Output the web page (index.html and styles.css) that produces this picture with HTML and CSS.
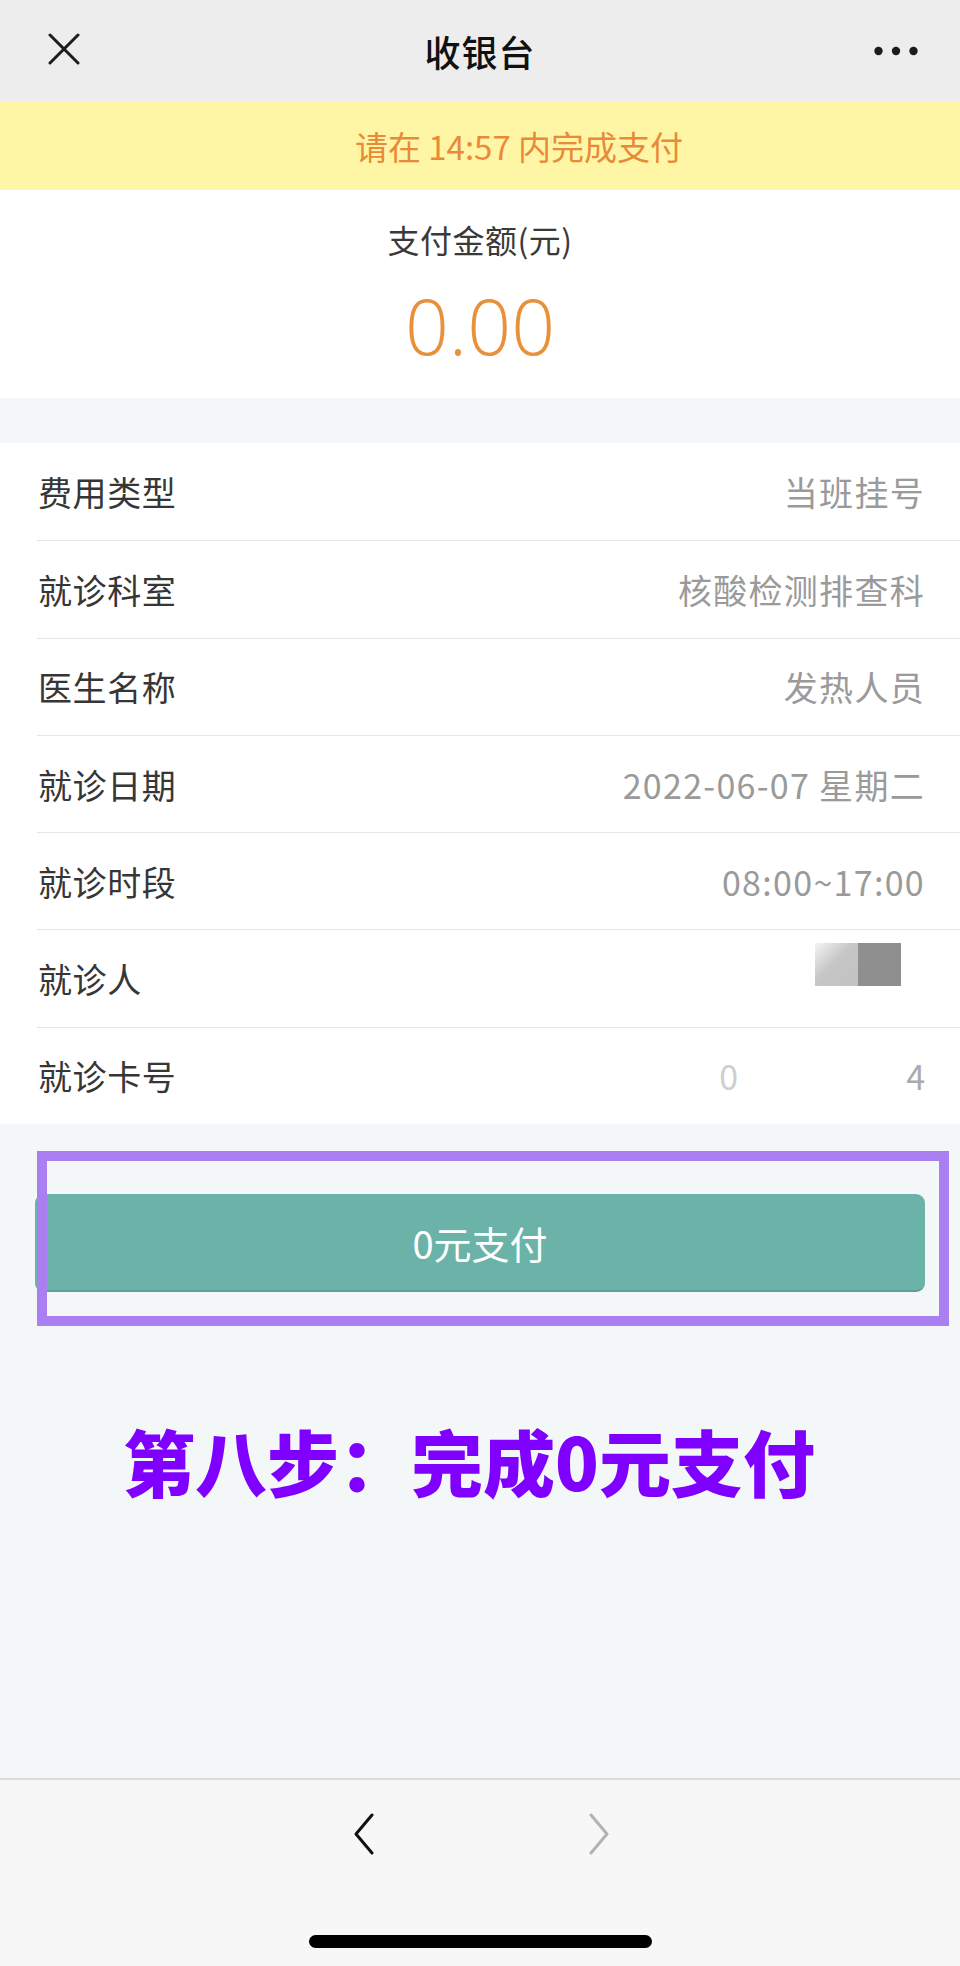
FILE: index.html
```html
<!DOCTYPE html>
<html lang="zh-CN">
<head>
<meta charset="utf-8">
<title>收银台</title>
<link rel="stylesheet" href="styles.css">
</head>
<body>
<div class="page">
  <header class="nav">
    <div class="nav-left">
      <svg class="icon-close" width="32" height="32" viewBox="0 0 32 32"><path d="M2 2 L30 30 M30 2 L2 30" stroke="#1c1c1c" stroke-width="3" stroke-linecap="round" fill="none"/></svg>
    </div>
    <div class="nav-title">收银台</div>
    <div class="nav-right">
      <svg class="icon-more" width="44" height="10" viewBox="0 0 44 10"><circle cx="4.5" cy="5" r="4.2" fill="#1c1c1c"/><circle cx="22" cy="5" r="4.2" fill="#1c1c1c"/><circle cx="39.5" cy="5" r="4.2" fill="#1c1c1c"/></svg>
    </div>
  </header>

  <div class="notice">请在 14:57 内完成支付</div>

  <section class="amount">
    <div class="amount-label">支付金额(元)</div>
    <div class="amount-value">0.00</div>
  </section>

  <div class="gap"></div>

  <section class="list">
    <div class="row"><span class="label">费用类型</span><span class="value">当班挂号</span></div>
    <div class="row"><span class="label">就诊科室</span><span class="value">核酸检测排查科</span></div>
    <div class="row"><span class="label">医生名称</span><span class="value">发热人员</span></div>
    <div class="row"><span class="label">就诊日期</span><span class="value">2022-06-07 星期二</span></div>
    <div class="row"><span class="label">就诊时段</span><span class="value">08:00~17:00</span></div>
    <div class="row"><span class="label">就诊人</span><span class="value masked"><i class="blk blk-light"></i><i class="blk blk-dark"></i></span></div>
    <div class="row"><span class="label">就诊卡号</span><span class="value card"><span class="d0">0</span><span class="d4">4</span></span></div>
  </section>

  <section class="action">
    <div class="btn-wrap">
      <button class="pay-btn">0元支付</button>
      <div class="highlight"></div>
    </div>
    <div class="step">第八步：完成0元支付</div>
  </section>

  <footer class="toolbar">
    <div class="arrows">
      <svg width="22" height="42" viewBox="0 0 22 42"><polyline points="19,2 3,21 19,40" stroke="#111" stroke-width="3" fill="none" stroke-linecap="round" stroke-linejoin="round"/></svg>
      <svg width="22" height="42" viewBox="0 0 22 42"><polyline points="3,2 19,21 3,40" stroke="#b3b3b3" stroke-width="3" fill="none" stroke-linecap="round" stroke-linejoin="round"/></svg>
    </div>
    <div class="home-bar"></div>
  </footer>
</div>
</body>
</html>
```

FILE: styles.css
```css
* { box-sizing: border-box; }
html, body { margin: 0; padding: 0; }
body {
  width: 960px;
  font-family: "Noto Sans CJK SC", "Noto Sans", sans-serif;
  background: #f3f7f7;
}
.page { width: 960px; }

.nav {
  height: 102px;
  background: #ededed;
  display: grid;
  grid-template-columns: 1fr auto 1fr;
  align-items: center;
}
.nav-left { padding-left: 48px; display: flex; align-items: center; padding-bottom: 4px; }
.nav-title {
  font-size: 36px;
  font-weight: 500;
  color: #111;
  letter-spacing: 1px;
}
.nav-right { display: flex; justify-content: flex-end; padding-right: 42px; }

.notice {
  height: 88px;
  background: #fef6a4;
  color: #e98a3b;
  font-size: 33px;
  display: flex;
  align-items: center;
  justify-content: center;
  padding-left: 78px;
}

.amount {
  height: 208px;
  background: #fff;
  display: flex;
  flex-direction: column;
  align-items: center;
  padding-top: 28px;
}
.amount-label {
  font-size: 32px;
  line-height: 42px;
  color: #3a3a3a;
  letter-spacing: 0.5px;
}
.amount-value {
  margin-top: 28px;
  font-family: "Open Sans", "Liberation Sans", sans-serif;
  font-weight: 300;
  font-size: 77px;
  line-height: 76px;
  color: #e8913a;
}

.gap { height: 45px; background: #f3f7f7; }

.list { background: #fff; }
.row {
  height: 97.3px;
  margin-left: 37px;
  padding-right: 36px;
  display: flex;
  align-items: center;
  justify-content: space-between;
  border-top: 1px solid #e6e6e6;
  font-size: 34px;
}
.row:first-child { border-top: none; }
.label { color: #363636; padding-left: 1px; letter-spacing: 0.6px; }
.value { color: #9a9a9a; letter-spacing: 1.3px; margin-right: -1px; }

.masked { display: flex; margin-top: -28px; margin-right: 23px; }
.blk { display: block; width: 43px; height: 43px; }
.blk-light { background: linear-gradient(135deg, #f4f4f4 0%, #c6c6c6 45%, #c2c2c2 100%); }
.blk-dark { background: #8f8f8f; }

.card { display: flex; gap: 168px; letter-spacing: 0; }
.card .d0 { color: #cfcfcf; }
.card .d4 { color: #ababab; }

.action {
  height: 654px;
  background: #f3f7f7;
  padding-top: 70px;
}
.btn-wrap { position: relative; height: 98px; }
.pay-btn {
  display: block;
  margin-left: 35px;
  width: 890px;
  height: 98px;
  border: none;
  border-bottom: 2px solid #5e9e94;
  border-radius: 9px;
  background: #6bb3a8;
  color: #fff;
  font-family: "Noto Sans CJK SC", "Noto Sans", sans-serif;
  font-size: 38px;
  padding: 0;
}
.highlight {
  position: absolute;
  left: 37px;
  top: -43px;
  width: 912px;
  height: 175px;
  border: 10px solid #a97ff2;
}
.step {
  margin-top: 123px;
  text-align: center;
  padding-right: 22px;
  font-size: 72px;
  line-height: 90px;
  font-weight: 900;
  color: #8000ff;
}

.toolbar {
  height: 188px;
  background: #f7f7f7;
  border-top: 2px solid #dcdcdc;
  display: flex;
  flex-direction: column;
  align-items: center;
}
.arrows {
  margin-top: 33px;
  display: flex;
  gap: 213px;
  padding-left: 2px;
}
.home-bar {
  margin-top: 80px;
  width: 343px;
  height: 13px;
  border-radius: 7px;
  background: #000;
}
```
